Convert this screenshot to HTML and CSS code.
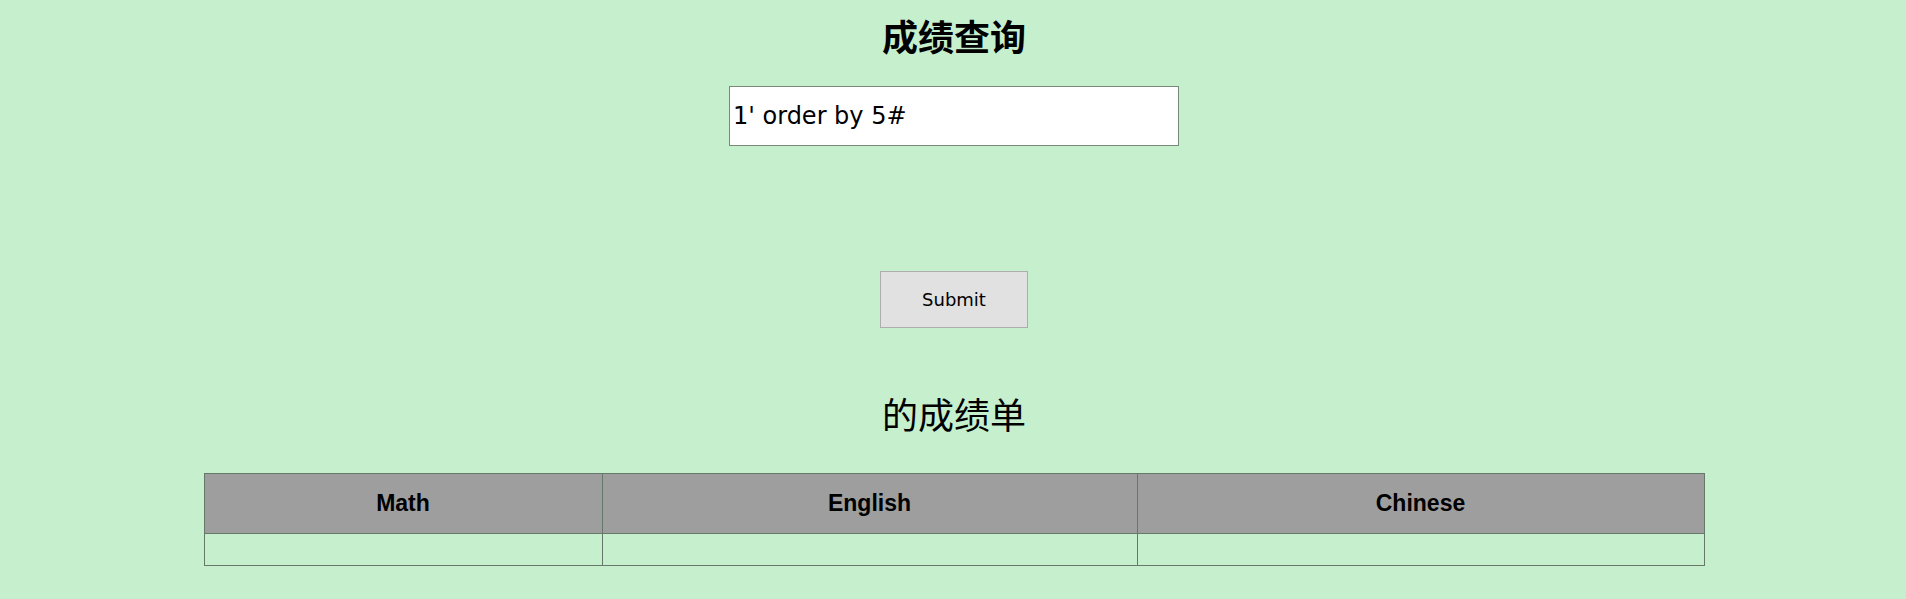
FILE: index.html
```html
<!DOCTYPE html>
<html lang="zh">
<head>
<meta charset="utf-8">
<title>成绩查询</title>
<link rel="stylesheet" href="styles.css">
</head>
<body>
<main class="page">
  <h1 class="title">成绩查询</h1>
  <form class="query">
    <input class="query-input" type="text" value="1' order by 5#">
    <button class="submit" type="button">Submit</button>
  </form>
  <h2 class="subtitle">的成绩单</h2>
  <table class="scores">
    <colgroup>
      <col class="c-math">
      <col class="c-eng">
      <col class="c-chn">
    </colgroup>
    <thead>
      <tr><th>Math</th><th>English</th><th>Chinese</th></tr>
    </thead>
    <tbody>
      <tr><td></td><td></td><td></td></tr>
    </tbody>
  </table>
</main>
</body>
</html>
```

FILE: styles.css
```css
html, body {
  margin: 0;
  padding: 0;
  background: #c6efce;
}
body {
  font-family: "DejaVu Sans", "Noto Sans CJK SC", sans-serif;
  color: #000;
}
.page {
  display: flex;
  flex-direction: column;
  align-items: center;
  padding-top: 17px;
  padding-left: 2px;
}
.title {
  margin: 0;
  font-family: "Noto Sans CJK SC", sans-serif;
  font-size: 36px;
  line-height: 36px;
  font-weight: 700;
}
.query {
  display: flex;
  flex-direction: column;
  align-items: center;
  margin: 33px 0 0 0;
}
.query-input {
  box-sizing: border-box;
  width: 450px;
  height: 60px;
  margin: 0;
  padding: 0 3px;
  border: 1px solid #7a8a7a;
  background: #fff;
  font-family: "DejaVu Sans", sans-serif;
  font-size: 24px;
  color: #000;
  outline: none;
}
.submit {
  box-sizing: border-box;
  width: 148px;
  height: 57px;
  margin-top: 125px;
  padding: 0;
  border: 1px solid #adadad;
  background: #e1e1e1;
  font-family: "DejaVu Sans", sans-serif;
  font-size: 18px;
  color: #000;
}
.subtitle {
  margin: 67px 0 0 0;
  font-family: "Noto Sans CJK SC", sans-serif;
  font-size: 36px;
  line-height: 36px;
  font-weight: 400;
}
.scores {
  margin-top: 42px;
  width: 1500px;
  border-collapse: collapse;
  table-layout: fixed;
}
.c-math { width: 398px; }
.c-eng { width: 535px; }
.c-chn { width: 567px; }
.scores th,
.scores td {
  border: 1px solid #66786a;
  padding: 0;
}
.scores th {
  height: 59px;
  background: #9e9e9e;
  font-family: "Liberation Sans", Arial, sans-serif;
  font-size: 23px;
  font-weight: 700;
  text-align: center;
}
.scores td {
  height: 31px;
}
```
